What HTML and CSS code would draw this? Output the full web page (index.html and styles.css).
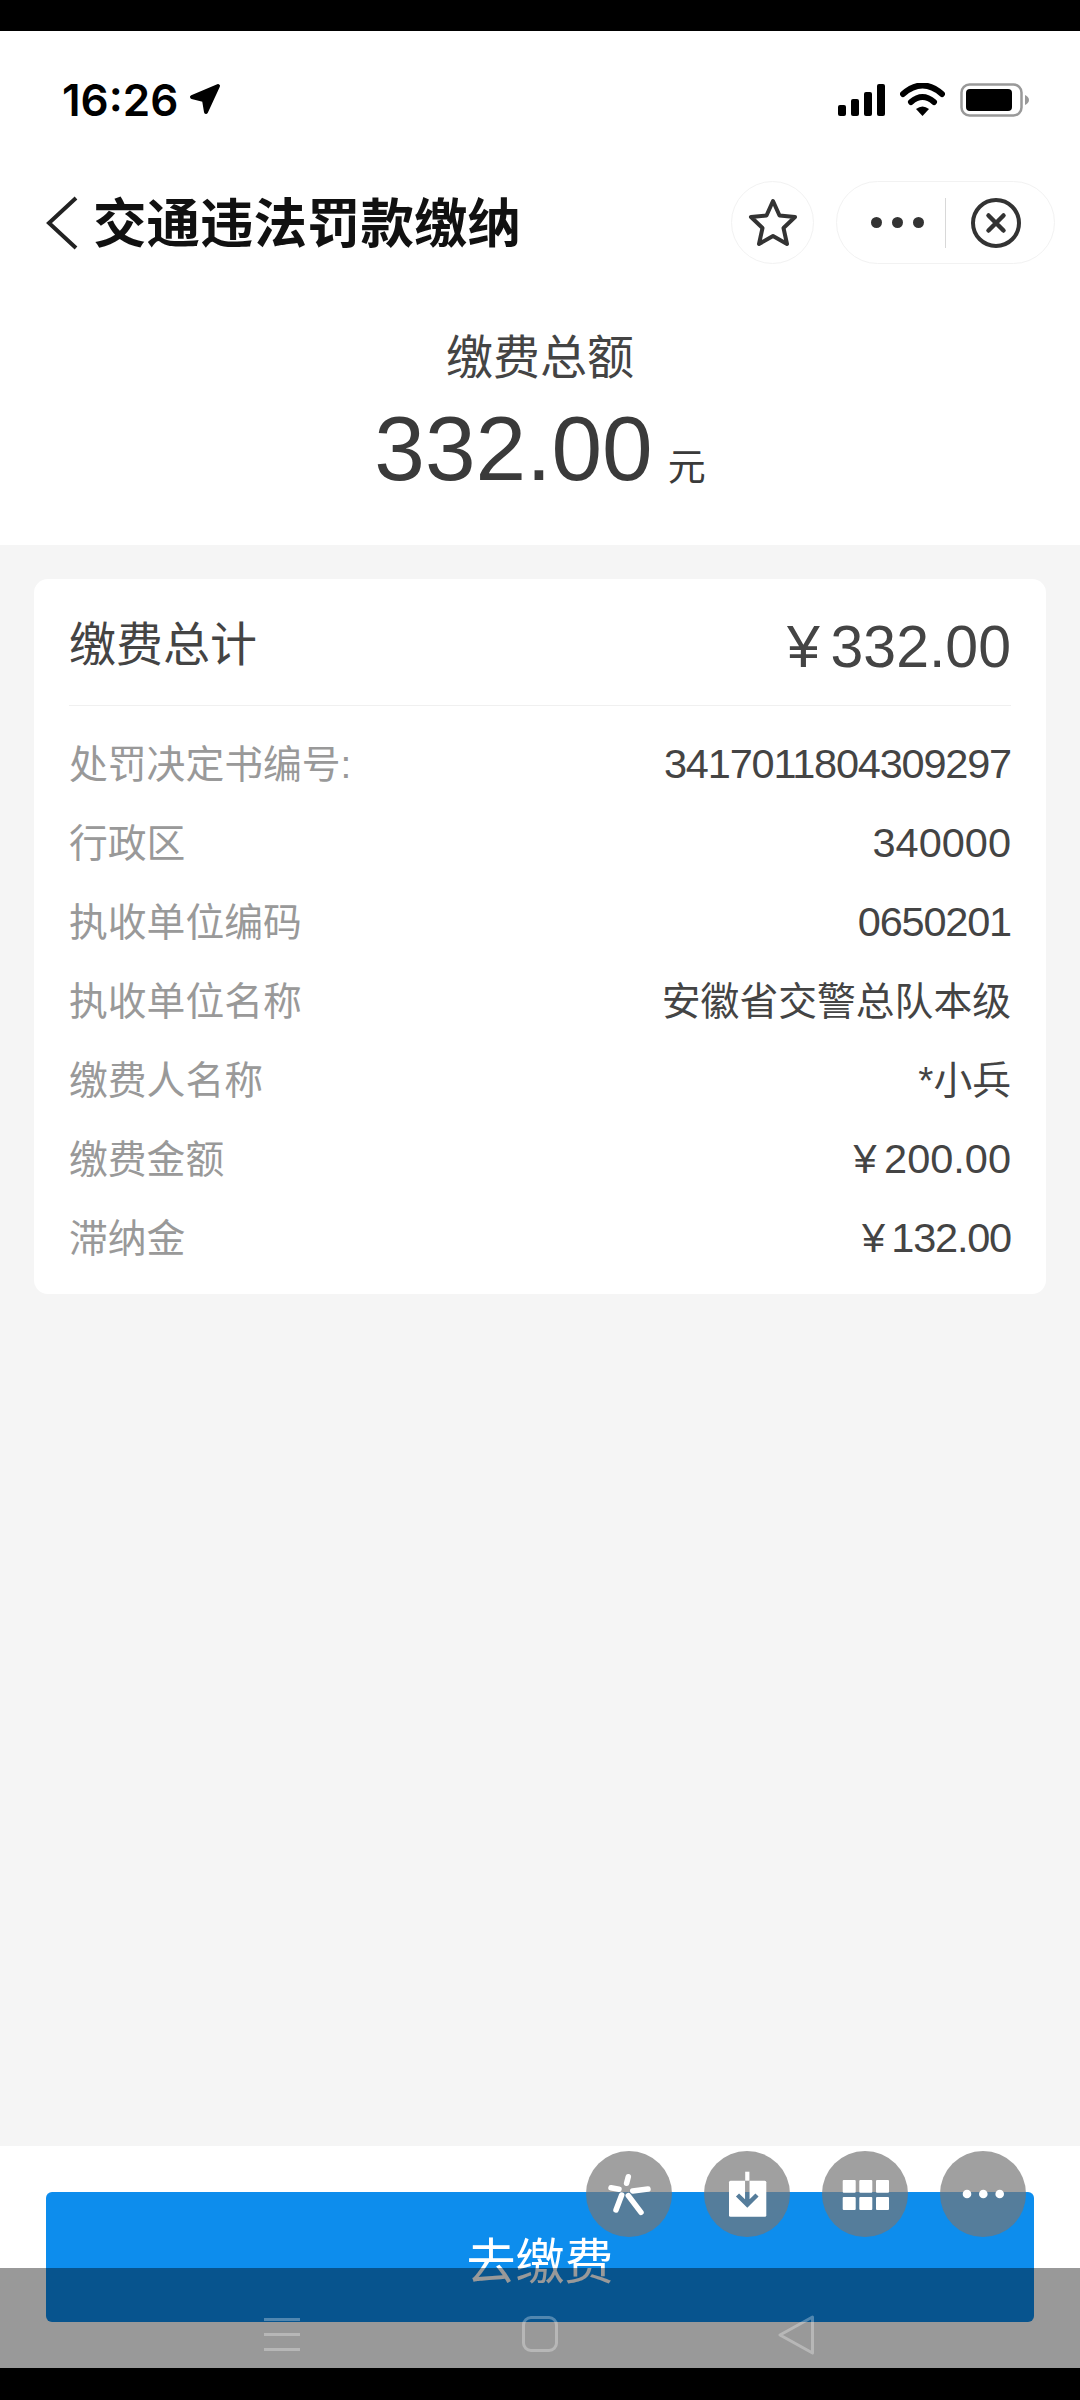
FILE: index.html
```html
<!DOCTYPE html>
<html>
<head>
  <meta charset="utf-8" />
  <meta name="viewport" content="width=device-width" />
  <title>交通违法罚款缴纳</title>
  <link rel="stylesheet" href="styles.css">
</head>

<body>
  <div class="screen">
    <div class="status-bar">
      <div class="status-left">
        <span class="status-time">16:26</span>
        <svg class="icon-location" viewBox="0 0 34 34" width="34" height="34">
          <path d="M30 3 L4 14 L16 17 L18 29 Z" fill="#000" stroke="#000" stroke-width="4" stroke-linejoin="round" />
        </svg>
      </div>
      <div class="status-right">
        <svg viewBox="0 0 47 32" width="47" height="32">
          <rect x="0" y="21" width="8" height="11" rx="2" fill="#000" />
          <rect x="13" y="15" width="8" height="17" rx="2" fill="#000" />
          <rect x="26" y="8" width="8" height="24" rx="2" fill="#000" />
          <rect x="39" y="0" width="8" height="32" rx="2" fill="#000" />
        </svg>
        <svg viewBox="0 0 45 34" width="45" height="34">
          <path d="M3 11 Q22.500 -6 42 11" fill="none" stroke="#000" stroke-width="6" stroke-linecap="round" />
          <path d="M11 19 Q22.500 9 34 19" fill="none" stroke="#000" stroke-width="6" stroke-linecap="round" />
          <path d="M16 26 Q22.500 21 29 26 L22.500 33 Z" fill="#000" />
        </svg>
        <svg viewBox="0 0 70 34" width="70" height="34">
          <rect x="1.500" y="1.500" width="60" height="31" rx="8" fill="none" stroke="#999" stroke-width="2.500" />
          <rect x="6" y="6" width="46" height="22" rx="4" fill="#000" />
          <path d="M65 12 Q69 14 69 17 Q69 20 65 22 Z" fill="#999" />
        </svg>
      </div>
    </div>

    <div class="title-bar">
      <svg class="icon-back" viewBox="0 0 34 54" width="34" height="54">
        <path d="M31 2 L4 27 L31 52" fill="none" stroke="#222" stroke-width="4" />
      </svg>
      <h1 class="page-title">交通违法罚款缴纳</h1>
      <div class="capsule-star">
        <svg viewBox="0 0 52 52" width="52" height="52">
          <path d="M26 4 L32.500 18.500 L48 20 L36.500 31 L40 47 L26 39 L12 47 L15.500 31 L4 20 L19.500 18.500 Z" fill="none" stroke="#333" stroke-width="4" stroke-linejoin="round" />
        </svg>
      </div>
      <div class="capsule">
        <div class="capsule-more">
          <span class="capsule-dot"></span>
          <span class="capsule-dot"></span>
          <span class="capsule-dot"></span>
        </div>
        <div class="capsule-line"></div>
        <div class="capsule-close">
          <svg viewBox="0 0 50 50" width="50" height="50">
            <circle cx="25" cy="25" r="23" fill="none" stroke="#333" stroke-width="4" />
            <path d="M17.500 17.500 L32.500 32.500 M32.500 17.500 L17.500 32.500" fill="none" stroke="#333" stroke-width="4.500" stroke-linecap="round" />
          </svg>
        </div>
      </div>
    </div>

    <div class="total-head">
      <div class="total-label">缴费总额</div>
      <div class="total-amount">332.00<span class="total-unit">元</span></div>
    </div>

    <div class="content">
      <div class="card">
        <div class="card-head">
          <span class="card-title">缴费总计</span>
          <span class="card-sum"><span class="yen">¥</span>332.00</span>
        </div>
        <div class="card-list">
          <div class="row"><span class="row-label">处罚决定书编号:</span><span class="row-value num tight">3417011804309297</span></div>
          <div class="row"><span class="row-label">行政区</span><span class="row-value num">340000</span></div>
          <div class="row"><span class="row-label">执收单位编码</span><span class="row-value num tight">0650201</span></div>
          <div class="row"><span class="row-label">执收单位名称</span><span class="row-value cjk">安徽省交警总队本级</span></div>
          <div class="row"><span class="row-label">缴费人名称</span><span class="row-value cjk">*小兵</span></div>
          <div class="row"><span class="row-label">缴费金额</span><span class="row-value num"><span class="yen">¥</span>200.00</span></div>
          <div class="row"><span class="row-label">滞纳金</span><span class="row-value num tight"><span class="yen">¥</span>132.00</span></div>
        </div>
      </div>
    </div>

    <div class="footer">
      <button class="pay-button" type="button">去缴费</button>
    </div>

    <!-- floating tools, they sit over the button -->
    <div class="float-tools">
      <div class="float-btn">
        <svg viewBox="0 0 86 86" width="86" height="86">
          <path d="M40.600 32.300 L42.300 25.700 M33 38.300 L25 36.700 M46.700 40 L62 38 M35.700 44 L30 59 M42.300 44.700 L55 61.300" fill="none" stroke="#fff" stroke-width="5.500" stroke-linecap="round" />
        </svg>
      </div>
      <div class="float-btn">
        <svg viewBox="0 0 86 86" width="86" height="86">
          <mask id="arrow-cut">
            <rect x="0" y="0" width="86" height="86" fill="#fff" />
            <path d="M43.300 29 L43.300 53 M33.500 44 L43.300 53.500 L53 44" fill="none" stroke="#000" stroke-width="4.500" />
          </mask>
          <rect x="25" y="29.700" width="37.300" height="36" rx="1.500" fill="#fff" mask="url(#arrow-cut)" />
          <rect x="41.200" y="20.700" width="4.200" height="9" fill="#fff" />
        </svg>
      </div>
      <div class="float-btn">
        <svg viewBox="0 0 86 86" width="86" height="86">
          <rect x="20.700" y="29" width="13" height="12.700" rx="1" fill="#fff" />
          <rect x="37.300" y="29" width="13" height="12.700" rx="1" fill="#fff" />
          <rect x="54" y="29" width="13" height="12.700" rx="1" fill="#fff" />
          <rect x="20.700" y="46" width="13" height="13" rx="1" fill="#fff" />
          <rect x="37.300" y="46" width="13" height="13" rx="1" fill="#fff" />
          <rect x="54" y="46" width="13" height="13" rx="1" fill="#fff" />
        </svg>
      </div>
      <div class="float-btn">
        <svg viewBox="0 0 86 86" width="86" height="86">
          <circle cx="27" cy="43" r="4.300" fill="#fff" />
          <circle cx="43.300" cy="43" r="4.300" fill="#fff" />
          <circle cx="59.700" cy="43" r="4.300" fill="#fff" />
        </svg>
      </div>
    </div>

    <!-- android nav bar, see-through over the page -->
    <div class="nav-bar">
      <div class="nav-menu">
        <span class="nav-line"></span>
        <span class="nav-line"></span>
        <span class="nav-line"></span>
      </div>
      <div class="nav-home"></div>
      <svg class="nav-back" viewBox="0 0 38 40" width="38" height="40">
        <path d="M34.500 2 L2 20 L34.500 38 Z" fill="none" stroke="rgba(255,255,255,0.3)" stroke-width="3" stroke-linejoin="round" />
      </svg>
    </div>
  </div>
</body>
</html>
```

FILE: styles.css
```css
* {
  box-sizing: border-box;
}

body {
  margin: 0;
  background-color: #000;
  color: #333;
  font-family: "Liberation Sans", "Noto Sans CJK SC", sans-serif;
}

.screen {
  position: relative;
  width: 1080px;
  height: 2400px;
  padding: 31px 0 32px;
  display: flex;
  flex-direction: column;
  overflow: hidden;
}

/* status bar */
.status-bar {
  height: 137px;
  background-color: #fff;
  padding: 49px 50px 0 62px;
  display: flex;
  justify-content: space-between;
  align-items: flex-start;
}

.status-left {
  display: flex;
  align-items: center;
  gap: 10px;
  color: #000;
}

.status-time {
  font-family: Inter, "Liberation Sans", sans-serif;
  font-size: 44px;
  line-height: 40px;
  font-weight: 600;
}

.status-right {
  display: flex;
  align-items: center;
  gap: 15px;
  padding-top: 3px;
}

/* title bar */
.title-bar {
  height: 109px;
  background-color: #fff;
  padding: 0 25px 0 45px;
  display: flex;
  align-items: center;
}

.icon-back {
  flex-shrink: 0;
  margin-right: 14px;
}

.page-title {
  flex: 1;
  margin: 0;
  padding-bottom: 6px;
  font-size: 53.500px;
  font-weight: 700;
  color: #111;
}

.capsule-star {
  width: 83px;
  height: 83px;
  margin-right: 22px;
  border: 1px solid #f2f2f2;
  border-radius: 50%;
  display: flex;
  align-items: center;
  justify-content: center;
}

.capsule {
  width: 219px;
  height: 83px;
  border: 1px solid #f2f2f2;
  border-radius: 42px;
  display: flex;
  align-items: center;
}

.capsule-more {
  width: 108px;
  padding-left: 34px;
  display: flex;
  gap: 10px;
}

.capsule-dot {
  width: 11px;
  height: 11px;
  border-radius: 50%;
  background-color: #333;
}

.capsule-line {
  width: 1px;
  height: 50px;
  background-color: #d8d8d8;
}

.capsule-close {
  flex: 1;
  display: flex;
  justify-content: center;
  padding-right: 8px;
}

/* total */
.total-head {
  height: 268px;
  background-color: #fff;
  text-align: center;
}

.total-label {
  padding-top: 48px;
  font-size: 47px;
  line-height: 66px;
  color: #444;
}

.total-amount {
  margin-top: 13px;
  font-size: 91px;
  line-height: 90px;
  color: #3a3a3a;
}

.total-unit {
  margin-left: 15px;
  font-size: 38px;
}

/* details card */
.content {
  flex: 1;
  background-color: #f5f5f5;
  padding: 34px;
}

.card {
  background-color: #fff;
  border-radius: 14px;
  padding: 0 35px 18px;
}

.card-head {
  height: 127px;
  border-bottom: 1px solid #f0f0f0;
  display: flex;
  justify-content: space-between;
  align-items: center;
}

.card-title {
  padding-bottom: 4px;
  font-size: 47px;
  color: #444;
}

.card-sum {
  padding-top: 10px;
  font-size: 59px;
  color: #444;
}

.yen {
  margin-right: 0.18em;
}

.card-list {
  padding-top: 17px;
}

.row {
  height: 79px;
  display: flex;
  justify-content: space-between;
  align-items: center;
  font-size: 38.800px;
}

.row-label {
  padding-bottom: 4px;
  color: #999;
}

.row-value {
  color: #444;
}

.row-value.num {
  padding-top: 2px;
  font-size: 41.500px;
}

/* the 1 is narrow in the original font, so these run a bit tighter */
.row-value.tight {
  letter-spacing: -1.200px;
}

.row-value.cjk {
  padding-bottom: 3px;
}

/* bottom button */
.footer {
  height: 222px;
  background-color: #fff;
  padding: 46px 46px 0;
}

.pay-button {
  display: block;
  width: 100%;
  height: 130px;
  border: none;
  border-radius: 6px;
  background-color: #0d8ded;
  color: #fff;
  font-family: inherit;
  font-size: 49px;
}

.float-tools {
  position: absolute;
  left: 586px;
  top: 2151px;
  display: flex;
  gap: 32px;
}

.float-btn {
  width: 86px;
  height: 86px;
  border-radius: 50%;
  background-color: rgba(117, 117, 117, 0.69);
}

.float-btn svg {
  display: block;
}

.nav-bar {
  position: absolute;
  left: 0;
  top: 2268px;
  width: 1080px;
  height: 100px;
  background-color: rgba(0, 0, 0, 0.4);
}

.nav-menu {
  position: absolute;
  left: 264px;
  top: 50px;
  width: 36px;
  display: flex;
  flex-direction: column;
  gap: 12px;
}

.nav-line {
  height: 3px;
  background-color: rgba(255, 255, 255, 0.3);
}

.nav-home {
  position: absolute;
  left: 522px;
  top: 48px;
  width: 36px;
  height: 36px;
  border: 3px solid rgba(255, 255, 255, 0.3);
  border-radius: 9px;
}

.nav-back {
  position: absolute;
  left: 778px;
  top: 47px;
}
```
